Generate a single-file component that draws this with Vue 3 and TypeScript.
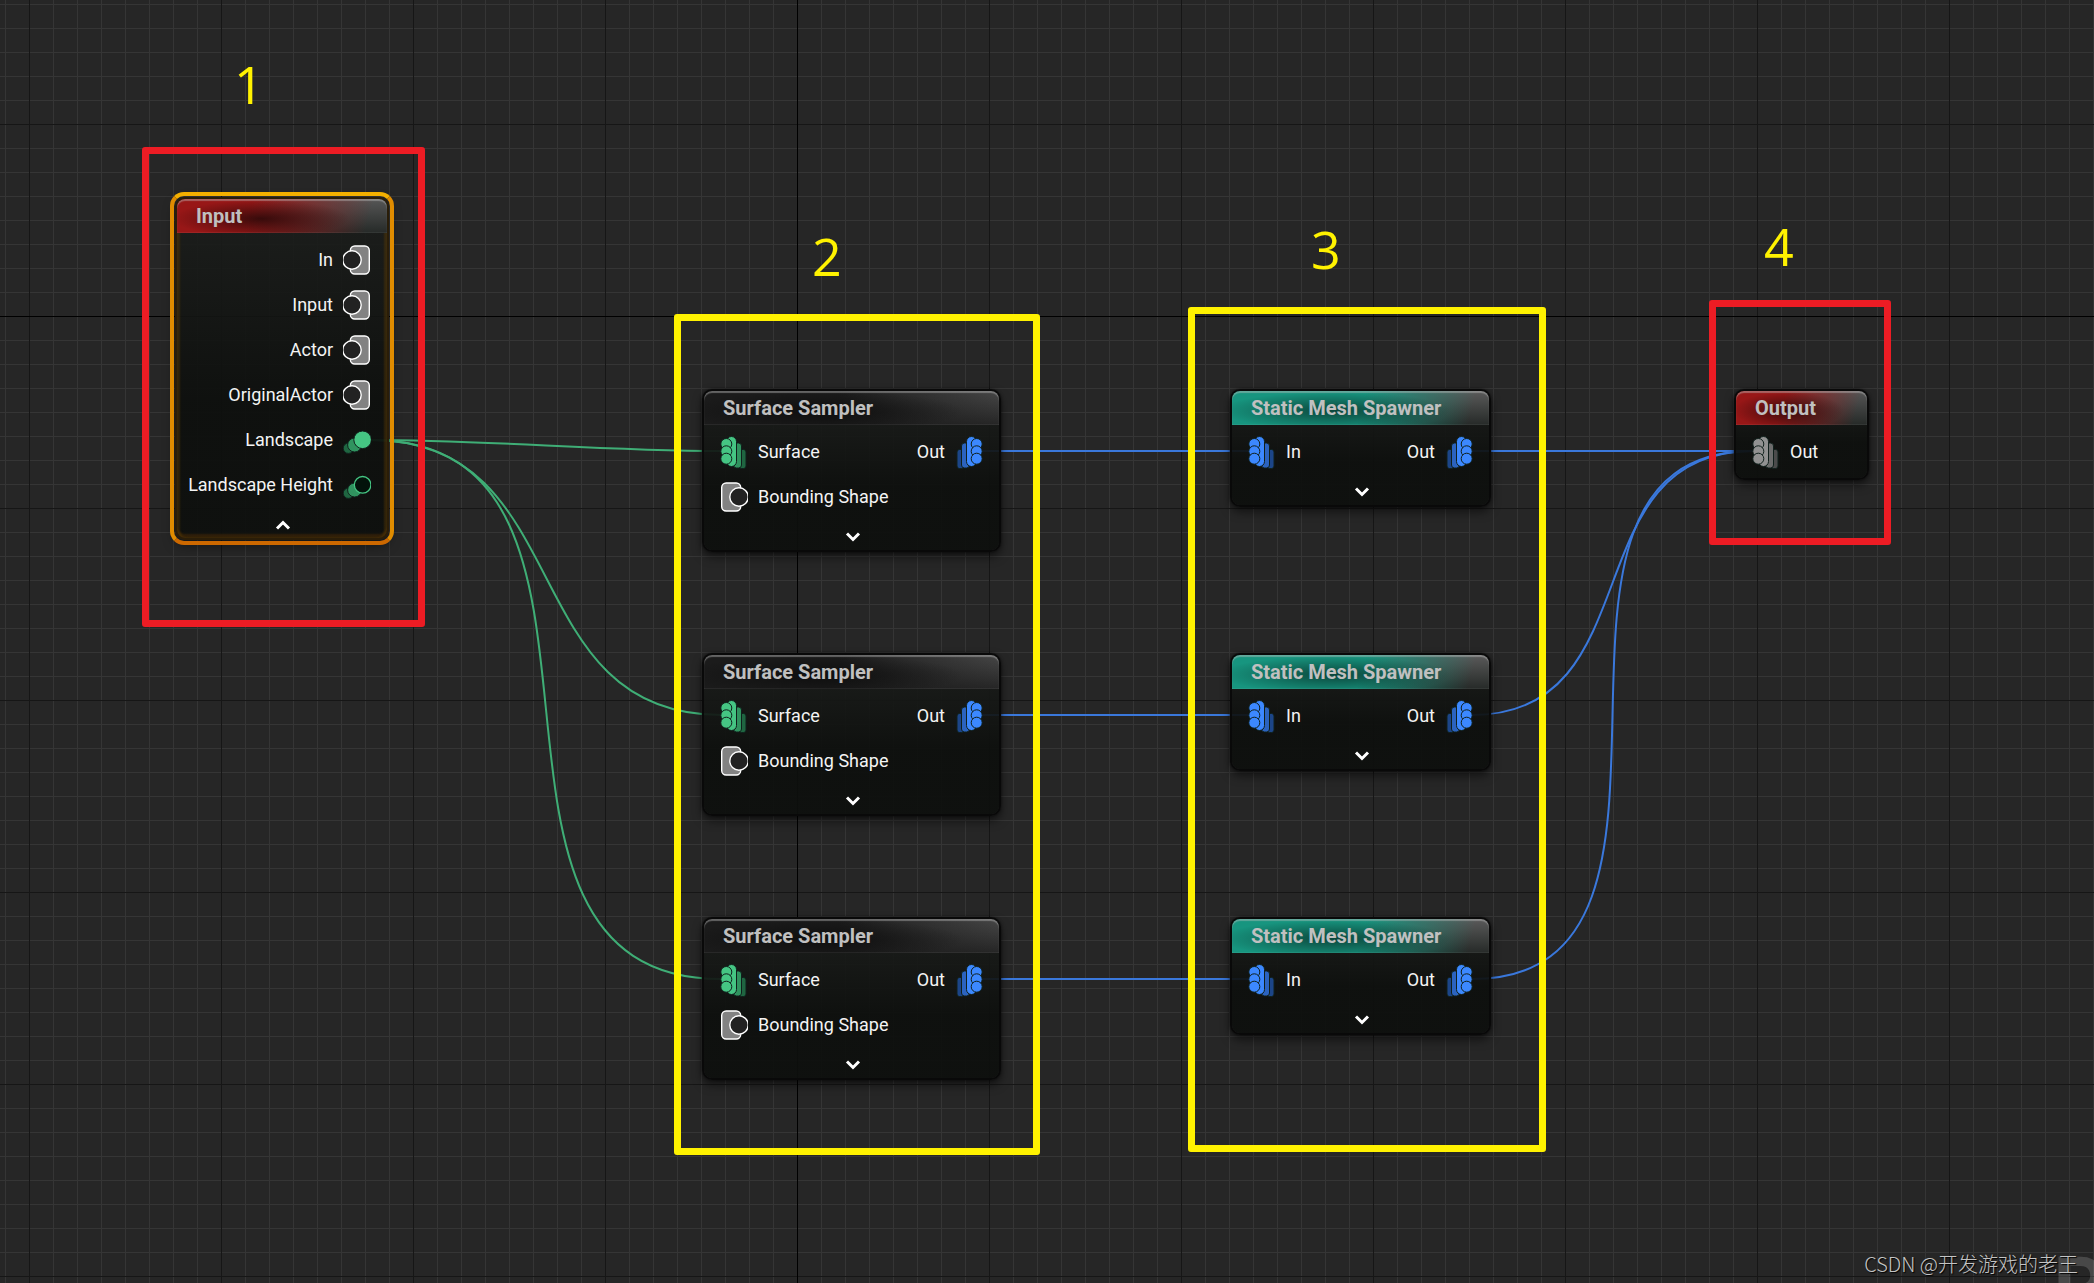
<script setup lang="ts">
type PinShape = 'stack' | 'shape' | 'points' | 'pointsOpen'
type Tone = 'green' | 'blue' | 'grey'

interface Pin {
  label: string
  shape: PinShape
  tone: Tone
}

interface GraphNode {
  id: string
  title: string
  theme: 'red' | 'dark' | 'teal'
  x: number
  y: number
  width: number
  inputs: Pin[]
  outputs: Pin[]
  toggle?: 'up' | 'down'
  selected?: boolean
}

interface Wire {
  from: [number, number]
  to: [number, number]
  tone: Tone
}

const rowTops = [389, 653, 917]

const samplers: GraphNode[] = rowTops.map((y, i) => ({
  id: `sampler-${i}`,
  title: 'Surface Sampler',
  theme: 'dark',
  x: 702,
  y,
  width: 299,
  inputs: [
    { label: 'Surface', shape: 'stack', tone: 'green' },
    { label: 'Bounding Shape', shape: 'shape', tone: 'grey' },
  ],
  outputs: [{ label: 'Out', shape: 'stack', tone: 'blue' }],
  toggle: 'down',
}))

const spawners: GraphNode[] = rowTops.map((y, i) => ({
  id: `spawner-${i}`,
  title: 'Static Mesh Spawner',
  theme: 'teal',
  x: 1230,
  y,
  width: 261,
  inputs: [{ label: 'In', shape: 'stack', tone: 'blue' }],
  outputs: [{ label: 'Out', shape: 'stack', tone: 'blue' }],
  toggle: 'down',
}))

const nodes: GraphNode[] = [
  {
    id: 'input',
    title: 'Input',
    theme: 'red',
    x: 175,
    y: 197,
    width: 214,
    inputs: [],
    outputs: [
      { label: 'In', shape: 'shape', tone: 'grey' },
      { label: 'Input', shape: 'shape', tone: 'grey' },
      { label: 'Actor', shape: 'shape', tone: 'grey' },
      { label: 'OriginalActor', shape: 'shape', tone: 'grey' },
      { label: 'Landscape', shape: 'points', tone: 'green' },
      { label: 'Landscape Height', shape: 'pointsOpen', tone: 'green' },
    ],
    toggle: 'up',
    selected: true,
  },
  ...samplers,
  ...spawners,
  {
    id: 'output',
    title: 'Output',
    theme: 'red',
    x: 1734,
    y: 389,
    width: 135,
    inputs: [{ label: 'Out', shape: 'stack', tone: 'grey' }],
    outputs: [],
  },
]

const pinY = rowTops.map((y) => y + 62)

const wires: Wire[] = [
  ...pinY.map((y): Wire => ({ from: [371, 440], to: [721, y], tone: 'green' })),
  ...pinY.map((y): Wire => ({ from: [982, y], to: [1249, y], tone: 'blue' })),
  ...pinY.map((y): Wire => ({ from: [1472, y], to: [1753, pinY[0]], tone: 'blue' })),
]

// The tangent grows with the distance between the two pins on both axes.
function wirePath({ from, to }: Wire): string {
  const reach = Math.round((Math.abs(to[0] - from[0]) + Math.abs(to[1] - from[1])) / 3)
  return `M${from[0]} ${from[1]}C${from[0] + reach} ${from[1]} ${to[0] - reach} ${to[1]} ${to[0]} ${to[1]}`
}

const frames = [
  { x: 142, y: 147, w: 283, h: 480, tone: 'red' },
  { x: 674, y: 314, w: 366, h: 841, tone: 'yellow' },
  { x: 1188, y: 307, w: 358, h: 845, tone: 'yellow' },
  { x: 1709, y: 300, w: 182, h: 245, tone: 'red' },
]

const marks = [
  { text: '1', x: 234, y: 58 },
  { text: '2', x: 812, y: 230 },
  { text: '3', x: 1311, y: 223 },
  { text: '4', x: 1764, y: 220 },
]
</script>

<template>
  <main class="canvas">
    <svg class="wires" aria-hidden="true">
      <path v-for="(wire, i) in wires" :key="i" :d="wirePath(wire)" :class="wire.tone" />
    </svg>

    <article
      v-for="node in nodes"
      :key="node.id"
      class="node"
      :class="[node.theme, { selected: node.selected }]"
      :style="{ left: node.x + 'px', top: node.y + 'px', width: node.width + 'px' }"
    >
      <h2 class="title">{{ node.title }}</h2>
      <div class="pins" :class="{ closed: !node.toggle }">
        <ul
          v-for="side in (['inputs', 'outputs'] as const)"
          :key="side"
          class="side"
          :class="side"
        >
          <li v-for="pin in node[side]" :key="pin.label" class="pin">
            <svg class="glyph" :class="pin.tone" viewBox="0 0 28 34" aria-hidden="true">
              <g v-if="pin.shape === 'stack'" :transform="side === 'outputs' ? 'translate(28 0) scale(-1 1)' : undefined">
                <rect class="far" x="19" y="14.5" width="7" height="19" rx="2.5" />
                <rect class="mid" x="13.5" y="8" width="8" height="25" rx="3" />
                <rect class="near" x="6.5" y="1.5" width="10" height="30" rx="5" />
                <circle class="near" cx="6.3" cy="9" r="5.5" />
                <circle class="near" cx="6.3" cy="16.3" r="5.5" />
                <circle class="near" cx="6.3" cy="23.7" r="5.5" />
              </g>
              <g v-else-if="pin.shape === 'shape'" :transform="side === 'outputs' ? 'translate(28 0) scale(-1 1)' : undefined">
                <rect class="plate" x="1.7" y="3" width="19" height="28" rx="4.5" />
                <circle class="hole" cx="19" cy="17" r="9.2" />
              </g>
              <g v-else>
                <circle class="far" cx="5.4" cy="25.2" r="5.2" />
                <circle class="mid" cx="11.6" cy="22" r="7" />
                <circle v-if="pin.shape === 'points'" class="near" cx="19.6" cy="16.8" r="8.8" />
                <circle v-else class="ring" cx="19.6" cy="16.8" r="8.3" />
              </g>
            </svg>
            <span>{{ pin.label }}</span>
          </li>
        </ul>
      </div>
      <button
        v-if="node.toggle"
        class="toggle"
        type="button"
        :aria-label="node.toggle === 'up' ? 'Collapse' : 'Expand'"
      >
        <svg viewBox="0 0 16 10" width="16" height="10" aria-hidden="true">
          <path :d="node.toggle === 'up' ? 'M2 8.5L8 2.5L14 8.5' : 'M2 1.5L8 7.5L14 1.5'" />
        </svg>
      </button>
    </article>

    <div
      v-for="(frame, i) in frames"
      :key="'frame' + i"
      class="frame"
      :class="frame.tone"
      :style="{ left: frame.x + 'px', top: frame.y + 'px', width: frame.w + 'px', height: frame.h + 'px' }"
    />
    <span
      v-for="mark in marks"
      :key="mark.text"
      class="mark"
      :style="{ left: mark.x + 'px', top: mark.y + 'px' }"
    >{{ mark.text }}</span>

    <span class="corner">P</span>
    <span class="credit">CSDN @开发游戏的老王</span>
  </main>
</template>

<style>
body {
  margin: 0;
  background: #262626;
}
</style>

<style scoped>
.canvas {
  position: relative;
  min-height: 100vh;
  overflow: hidden;
  font-family: Roboto, "Noto Sans CJK SC", sans-serif;
  background:
    linear-gradient(#000, #000) 797px 0 / 1px 100% no-repeat,
    linear-gradient(#000, #000) 0 316px / 100% 1px no-repeat,
    linear-gradient(to right, #161616 1px, transparent 1px) 29px 0 / 192px 192px,
    linear-gradient(#161616 1px, transparent 1px) 0 124px / 192px 192px,
    linear-gradient(to right, #353535 1px, transparent 1px) 5px 0 / 24px 24px,
    linear-gradient(#353535 1px, transparent 1px) 0 4px / 24px 24px,
    #262626;
}

.wires {
  position: absolute;
  inset: 0;
  width: 100%;
  height: 100%;
  fill: none;
  stroke-width: 2;
}

.wires .green {
  stroke: #3fae76;
}

.wires .blue {
  stroke: #3a78dc;
}

.node {
  position: absolute;
  box-sizing: border-box;
  border: 2px solid #090909;
  border-radius: 10px;
  background: linear-gradient(rgba(28, 30, 28, 0.9), rgba(13, 15, 13, 0.93) 60%);
  background-clip: padding-box;
  box-shadow: 0 5px 10px rgba(0, 0, 0, 0.5), 0 0 3px rgba(0, 0, 0, 0.6);
}

.selected {
  border-color: #2a1d08;
  box-shadow: 0 5px 12px rgba(0, 0, 0, 0.5), inset 3px 0 2px rgba(90, 60, 5, 0.45),
    inset -3px 0 2px rgba(90, 60, 5, 0.45), inset 0 -4px 2px rgba(90, 50, 5, 0.45);
}

.selected::after {
  content: "";
  position: absolute;
  inset: -7px;
  border: 4px solid #e08c00;
  border-top-color: #f4b000;
  border-bottom-color: #cc6800;
  border-radius: 14px;
  pointer-events: none;
}

.title {
  box-sizing: border-box;
  height: 34px;
  margin: 0;
  padding-left: 19px;
  border-radius: 8px 8px 0 0;
  box-shadow: inset 0 2px 1px rgba(190, 190, 190, 0.45), inset 0 -1px 0 rgba(255, 255, 255, 0.06);
  font-size: 20px;
  font-weight: 700;
  line-height: 34px;
  color: #c0c0c0;
  white-space: nowrap;
}

.dark .title {
  background:
    radial-gradient(ellipse 48% 60% at 40% 60%, rgba(12, 12, 12, 0.8), transparent),
    linear-gradient(100deg, #1b1b1b 45%, transparent 105%),
    linear-gradient(#4c4c4c, #262626);
}

.red .title {
  background:
    radial-gradient(ellipse 42% 55% at 40% 58%, rgba(40, 8, 8, 0.85), transparent),
    linear-gradient(105deg, #981717 35%, rgba(150, 20, 20, 0) 90%),
    linear-gradient(#565656, #262a28);
}

.teal .title {
  background:
    radial-gradient(ellipse 45% 55% at 40% 58%, rgba(8, 50, 42, 0.8), transparent),
    linear-gradient(105deg, #17957f 50%, rgba(23, 146, 124, 0) 92%),
    linear-gradient(#5a5a5a, #262a28);
}

.pins {
  display: flex;
  justify-content: space-between;
  padding-top: 4px;
}

.pins.closed {
  padding-bottom: 4px;
}

.side {
  margin: 0;
  padding: 0;
  list-style: none;
}

.pin {
  display: flex;
  align-items: center;
  gap: 10px;
  height: 45px;
  font-size: 18px;
  line-height: 24px;
  color: #f4f4f4;
  white-space: nowrap;
}

.inputs .pin {
  padding-left: 16px;
}

.outputs .pin {
  flex-direction: row-reverse;
  padding-right: 16px;
}

.glyph {
  flex: none;
  width: 28px;
  height: 34px;
}

.glyph.green {
  --near: #45c583;
  --mid: #30935f;
  --far: #1f6641;
}

.glyph.blue {
  --near: #3c88ff;
  --mid: #2b63bf;
  --far: #1c4588;
}

.glyph.grey {
  --near: #919191;
  --mid: #6c6c6c;
  --far: #4b4b4b;
}

.near,
.mid,
.far {
  stroke: #10201c;
  stroke-width: 1;
}

.near {
  fill: var(--near);
}

.mid {
  fill: var(--mid);
}

.far {
  fill: var(--far);
}

.ring {
  fill: #03130b;
  stroke: var(--near);
  stroke-width: 1.3;
}

.plate {
  fill: #828282;
  stroke: #fff;
  stroke-width: 1.4;
}

.hole {
  fill: #222;
  stroke: #fff;
  stroke-width: 1.4;
}

.toggle {
  display: flex;
  align-items: center;
  justify-content: center;
  width: 100%;
  height: 31px;
  margin: 0;
  padding: 4px 0 0 2px;
  border: 0;
  background: none;
}

.toggle path {
  fill: none;
  stroke: #fff;
  stroke-width: 3;
}

.frame {
  position: absolute;
  box-sizing: border-box;
  border: 7px solid;
  border-radius: 3px;
}

.frame.red {
  border-color: #ed1c24;
}

.frame.yellow {
  border-color: #fff200;
}

.mark {
  position: absolute;
  font-family: "Open Sans", sans-serif;
  font-size: 52px;
  line-height: 52px;
  color: #fff200;
}

.corner {
  position: absolute;
  right: -11px;
  bottom: -43px;
  font-size: 80px;
  font-weight: 700;
  line-height: 80px;
  color: rgba(255, 255, 255, 0.16);
}

.credit {
  position: absolute;
  right: 16px;
  bottom: 5px;
  font-family: "Noto Sans CJK SC", sans-serif;
  font-size: 20px;
  font-weight: 300;
  line-height: 28px;
  color: #c4c4c4;
  text-shadow: 1px 1px 1px #000;
}
</style>
